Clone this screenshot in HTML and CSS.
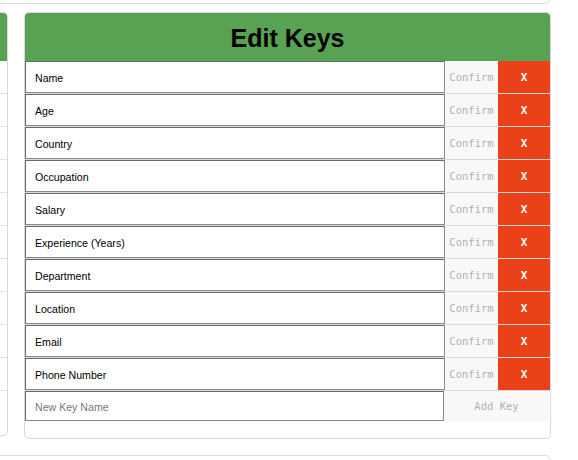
FILE: index.html
```html
<!DOCTYPE html>
<html>
<head>
<meta charset="utf-8">
<link rel="stylesheet" href="styles.css">
</head>
<body>
<div class="page">
  <div class="top-box"></div>
  <div class="columns">
    <section class="card side-card">
      <div class="card-head"></div>
      <div class="side-list">
        <div class="side-row"></div>
        <div class="side-row"></div>
        <div class="side-row"></div>
        <div class="side-row"></div>
        <div class="side-row"></div>
        <div class="side-row"></div>
        <div class="side-row"></div>
        <div class="side-row"></div>
        <div class="side-row"></div>
        <div class="side-row"></div>
        <div class="side-row last"></div>
      </div>
    </section>
    <section class="card edit-card">
      <div class="card-head"><h2 class="title">Edit Keys</h2></div>
      <div class="key-list">
        <div class="key-row"><input class="key-input" value="Name"><button class="confirm">Confirm</button><button class="remove">X</button></div>
        <div class="key-row"><input class="key-input" value="Age"><button class="confirm">Confirm</button><button class="remove">X</button></div>
        <div class="key-row"><input class="key-input" value="Country"><button class="confirm">Confirm</button><button class="remove">X</button></div>
        <div class="key-row"><input class="key-input" value="Occupation"><button class="confirm">Confirm</button><button class="remove">X</button></div>
        <div class="key-row"><input class="key-input" value="Salary"><button class="confirm">Confirm</button><button class="remove">X</button></div>
        <div class="key-row"><input class="key-input" value="Experience (Years)"><button class="confirm">Confirm</button><button class="remove">X</button></div>
        <div class="key-row"><input class="key-input" value="Department"><button class="confirm">Confirm</button><button class="remove">X</button></div>
        <div class="key-row"><input class="key-input" value="Location"><button class="confirm">Confirm</button><button class="remove">X</button></div>
        <div class="key-row"><input class="key-input" value="Email"><button class="confirm">Confirm</button><button class="remove">X</button></div>
        <div class="key-row"><input class="key-input" value="Phone Number"><button class="confirm">Confirm</button><button class="remove">X</button></div>
      </div>
      <div class="new-row"><input class="key-input new-input" placeholder="New Key Name"><button class="add">Add Key</button></div>
    </section>
  </div>
  <div class="bottom-box"></div>
</div>
</body>
</html>
```
FILE: styles.css
```css
html, body {
  margin: 0;
  padding: 0;
  background: #fff;
  overflow: hidden;
  font-family: "Liberation Sans", Arial, sans-serif;
}
.page {
  width: 1070px;
  height: 460px;
  overflow: hidden;
  margin-left: -519px;
}
.top-box {
  height: 40px;
  margin-top: -36px;
  border: 1px solid #dcdcdc;
  border-radius: 6px;
  box-sizing: border-box;
}
.columns {
  display: grid;
  grid-template-columns: 527px 527px;
  column-gap: 16px;
  align-items: start;
  margin-top: 8px;
}
.card {
  border: 1px solid #d8d8d8;
  border-radius: 5px;
  overflow: hidden;
  background: #fff;
}
.card-head {
  background: #59a253;
  height: 48px;
  display: flex;
  align-items: center;
  justify-content: center;
}
.title {
  margin: 0;
  font-size: 25px;
  font-weight: bold;
  color: #000;
  font-family: "Liberation Sans", Arial, sans-serif;
  position: relative;
  top: 1px;
}
.side-list {
  display: flex;
  flex-direction: column;
}
.side-row {
  height: 32px;
  border-bottom: 1px solid #e0e0e0;
}
.side-row.last {
  height: 44px;
  border-bottom: none;
}
.key-list {
  display: flex;
  flex-direction: column;
}
.key-row {
  display: flex;
  height: 32px;
  border-bottom: 1px solid #dadada;
}
.key-input {
  flex: 1;
  min-width: 0;
  height: 32px;
  box-sizing: border-box;
  margin: 0;
  border: 1px solid #8a8a8a;
  border-top-color: #6a6a6a;
  border-left-color: #6a6a6a;
  padding: 1px 0 0 9px;
  font-family: "Liberation Sans", Arial, sans-serif;
  font-size: 10.6px;
  color: #000;
  background: #fff;
  outline: none;
}
.key-input::placeholder {
  color: #777;
}
.confirm, .remove, .add {
  margin: 0;
  border: none;
  height: 32px;
  font-family: "DejaVu Sans Mono", monospace;
  font-size: 10.5px;
  padding: 0;
}
.confirm {
  width: 53px;
  background: #f8f8f8;
  color: #b0b0b0;
}
.remove {
  width: 52px;
  background: #ea4119;
  color: #fff;
  font-weight: bold;
  font-size: 11px;
}
.new-row {
  display: flex;
  height: 30px;
  margin-bottom: 17px;
  margin-right: 1px;
}
.new-input {
  height: 30px;
  padding-left: 9px;
}
.add {
  width: 105px;
  height: 30px;
  background: #f8f8f8;
  color: #b0b0b0;
}
.bottom-box {
  height: 40px;
  margin-top: 16px;
  border: 1px solid #dcdcdc;
  border-radius: 6px;
}
```
